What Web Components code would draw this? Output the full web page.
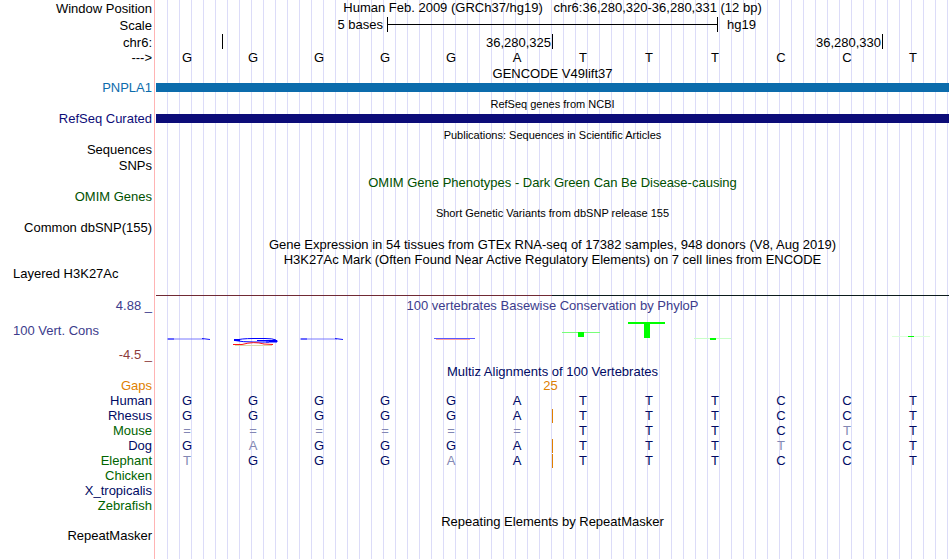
<!DOCTYPE html>
<html lang="en">
<head>
<meta charset="utf-8">
<title>chr6:36,280,320-36,280,331</title>
<style>
  body {
    margin: 0;
    background: #fff;
    color: #000;
    font: 13px/15px "Liberation Sans", Arial, sans-serif;
  }
</style>
</head>
<body>
<genome-view>
  <track-row size="tall" label="Window Position"><track-title>Human Feb. 2009 (GRCh37/hg19)   chr6:36,280,320-36,280,331 (12 bp)</track-title></track-row>
  <track-row size="tall" label="Scale"><scale-bar length="5 bases" assembly="hg19"></scale-bar></track-row>
  <track-row size="tall" label="chr6:"><position-ruler marks="36,280,325 36,280,330"></position-ruler></track-row>
  <track-row label="---&gt;"><base-strip bases="GGGGGATTTCCT"></base-strip></track-row>

  <track-row><track-title>GENCODE V49lift37</track-title></track-row>
  <track-row label="PNPLA1" style="color: #0c6cac"><gene-bar></gene-bar></track-row>
  <track-row gap><track-title small>RefSeq genes from NCBI</track-title></track-row>
  <track-row label="RefSeq Curated" style="color: #0c0c78"><gene-bar></gene-bar></track-row>
  <track-row gap><track-title small>Publications: Sequences in Scientific Articles</track-title></track-row>
  <track-row label="Sequences"></track-row>
  <track-row size="medium" label="SNPs"></track-row>
  <track-row gap style="color: #005000"><track-title>OMIM Gene Phenotypes - Dark Green Can Be Disease-causing</track-title></track-row>
  <track-row label="OMIM Genes" style="color: #005000"></track-row>
  <track-row gap><track-title small>Short Genetic Variants from dbSNP release 155</track-title></track-row>
  <track-row label="Common dbSNP(155)"></track-row>
  <track-row gap><track-title>Gene Expression in 54 tissues from GTEx RNA-seq of 17382 samples, 948 donors (V8, Aug 2019)</track-title></track-row>
  <track-row><track-title>H3K27Ac Mark (Often Found Near Active Regulatory Elements) on 7 cell lines from ENCODE</track-title></track-row>
  <track-row align="left" label="Layered H3K27Ac"><signal-baseline></signal-baseline></track-row>

  <conservation-track></conservation-track>

  <track-row gap style="color: #000a64"><track-title>Multiz Alignments of 100 Vertebrates</track-title></track-row>
  <track-row label="Gaps" style="color: #e08000"><base-gap>25</base-gap></track-row>
  <track-row label="Human" style="color: #000a64"><base-strip aligned bases="GGGGGATTTCCT"></base-strip></track-row>
  <track-row label="Rhesus" style="color: #000a64"><base-strip aligned bases="GGGGGATTTCCT" insert="6"></base-strip></track-row>
  <track-row label="Mouse" style="color: #006400"><base-strip aligned bases="======TTTCTT" faded="0,1,2,3,4,5,10"></base-strip></track-row>
  <track-row label="Dog" style="color: #000a64"><base-strip aligned bases="GAGGGATTTTCT" faded="1,9" insert="6"></base-strip></track-row>
  <track-row label="Elephant" style="color: #006400"><base-strip aligned bases="TGGGAATTTCCT" faded="0,4" insert="6"></base-strip></track-row>
  <track-row label="Chicken" style="color: #006400"></track-row>
  <track-row label="X_tropicalis" style="color: #000a64"></track-row>
  <track-row label="Zebrafish" style="color: #006400"></track-row>
  <track-row><track-title>Repeating Elements by RepeatMasker</track-title></track-row>
  <track-row label="RepeatMasker"></track-row>
</genome-view>

<script>
/**
 * Attaches an open shadow root filled with the given markup.
 *
 * @param {HTMLElement} element - The host element.
 * @param {string} markup - Styles and content.
 */
function attachMarkup (element, markup) {
  const template = document.createElement('template')
  template.innerHTML = markup
  element.attachShadow({ mode: 'open' }).appendChild(template.content.cloneNode(true))
}

/**
 * The page frame: label column, red divider and vertical guide lines.
 */
class GenomeView extends HTMLElement {
  constructor () {
    super()
    attachMarkup(this, `
      <style>
        :host {
          display: grid;
          grid-template-columns: 154px 1px 1fr;
          min-height: 100vh;
        }
        .divider {
          grid-area: 1 / 2;
          background: #ffb4b4;
        }
        .guides {
          grid-area: 1 / 3;
          margin: 0 1px;
          background: repeating-linear-gradient(to right, transparent 0 11px, #dcdcf8 11px 12px);
        }
        main {
          grid-area: 1 / 1 / 2 / 4;
          min-width: 0;
        }
      </style>
      <div class="divider"></div>
      <div class="guides"></div>
      <main><slot></slot></main>
    `)
  }
}
customElements.define('genome-view', GenomeView)

/**
 * One line of the browser: a label and whatever is drawn beside it.
 */
class TrackRow extends HTMLElement {
  constructor () {
    super()
    attachMarkup(this, `
      <style>
        :host {
          display: grid;
          grid-template-columns: 152px 1fr;
          column-gap: 4px;
          min-height: 15px;
          padding-right: 1px;
        }
        :host([size="medium"]) { min-height: 16px; }
        :host([size="tall"]) { min-height: 17px; }
        :host([gap]) { margin-top: 1px; }
        .label {
          line-height: 13px;
          text-align: right;
          white-space: nowrap;
        }
        :host([size="medium"]) .label { line-height: 15px; }
        :host([size="tall"]) .label { line-height: 17px; }
        :host([align="left"]) .label {
          padding-left: 13px;
          text-align: left;
        }
        .content { min-width: 0; }
      </style>
      <div class="label"></div>
      <div class="content"><slot></slot></div>
    `)
  }

  connectedCallback () {
    this.shadowRoot.querySelector('.label').textContent = this.getAttribute('label') || ''
  }
}
customElements.define('track-row', TrackRow)

/**
 * A centred line of text over the track area.
 */
class TrackTitle extends HTMLElement {
  constructor () {
    super()
    attachMarkup(this, `
      <style>
        :host { display: block; }
        div {
          text-align: center;
          white-space: pre;
        }
        :host([small]) { font-size: 11px; }
      </style>
      <div><slot></slot></div>
    `)
  }
}
customElements.define('track-title', TrackTitle)

/**
 * The size of the gap, centred on the boundary between two bases.
 */
class BaseGap extends HTMLElement {
  constructor () {
    super()
    attachMarkup(this, `
      <style>
        :host {
          display: block;
          padding-right: 4px;
          line-height: 13px;
          text-align: center;
        }
      </style>
      <slot></slot>
    `)
  }
}
customElements.define('base-gap', BaseGap)

/**
 * The scale: five bases out of the twelve in view.
 */
class ScaleBar extends HTMLElement {
  connectedCallback () {
    attachMarkup(this, `
      <style>
        :host {
          display: grid;
          grid-template-columns: 7fr 10fr 7fr;
          margin-right: 1px;
        }
        .length { text-align: right; padding-right: 4px; }
        .assembly { padding-left: 10px; }
        .bar {
          display: flex;
          align-items: center;
          height: 15px;
          margin-right: -1px;
          border: solid #000;
          border-width: 0 1px;
          box-sizing: border-box;
        }
        .bar::before {
          content: "";
          flex: 1;
          height: 1px;
          background: #000;
        }
      </style>
      <div class="length">${this.getAttribute('length')}</div>
      <div class="bar"></div>
      <div class="assembly">${this.getAttribute('assembly')}</div>
    `)
  }
}
customElements.define('scale-bar', ScaleBar)

/**
 * Ticks after every fifth base, with the position written to the left.
 */
class PositionRuler extends HTMLElement {
  connectedCallback () {
    const marks = this.getAttribute('marks').split(' ')
    attachMarkup(this, `
      <style>
        :host {
          display: grid;
          grid-template-columns: 1fr 5fr 5fr 1fr;
          margin-right: 1px;
        }
        span {
          height: 15px;
          padding: 1px 1px 0 0;
          box-sizing: border-box;
          text-align: right;
        }
        span + span { border-left: 1px solid #000; }
      </style>
      <span></span>${marks.map(mark => `<span>${mark}</span>`).join('')}<span></span>
    `)
  }
}
customElements.define('position-ruler', PositionRuler)

/**
 * Twelve bases in equal cells, some faded, with an optional insert mark.
 */
class BaseStrip extends HTMLElement {
  connectedCallback () {
    const faded = (this.getAttribute('faded') || '').split(',')
    const insert = this.getAttribute('insert')
    const cells = [...this.getAttribute('bases')].map((base, index) => {
      const names = []
      if (faded.includes(String(index))) names.push('faded')
      if (insert === String(index)) names.push('insert')
      return `<span class="${names.join(' ')}">${base}</span>`
    })
    attachMarkup(this, `
      <style>
        :host {
          display: grid;
          grid-template-columns: repeat(12, 1fr);
          line-height: 13px;
          margin-right: 1px;
        }
        :host([aligned]) { color: #000a64; }
        span {
          height: 14px;
          padding-right: 4px;
          text-align: center;
        }
        .faded { color: #8287b4; }
        .insert { box-shadow: inset 1px 0 #e08000; }
      </style>
      ${cells.join('')}
    `)
  }
}
customElements.define('base-strip', BaseStrip)

/**
 * A solid bar across the track in the row's own colour.
 */
class GeneBar extends HTMLElement {
  constructor () {
    super()
    attachMarkup(this, `
      <style>
        :host { display: block; padding-top: 2px; }
        div { height: 9px; background: currentColor; }
      </style>
      <div></div>
    `)
  }
}
customElements.define('gene-bar', GeneBar)

/**
 * The flat H3K27Ac signal.
 */
class SignalBaseline extends HTMLElement {
  constructor () {
    super()
    attachMarkup(this, `
      <style>
        :host { display: block; padding: 28px 0 2px; }
        div { height: 1px; background: linear-gradient(to right, #702a34 50%, #0c1c1c 50%); }
      </style>
      <div></div>
    `)
  }
}
customElements.define('signal-baseline', SignalBaseline)

/**
 * PhyloP conservation: axis labels and the sequence logo.
 */
class ConservationTrack extends HTMLElement {
  constructor () {
    super()
    attachMarkup(this, `
      <style>
        :host {
          display: grid;
          grid-template-columns: 152px 1fr;
          column-gap: 4px;
          padding-right: 1px;
          color: #3c3c8c;
        }
        .axis {
          display: flex;
          flex-direction: column;
          justify-content: space-between;
          padding-bottom: 1px;
          text-align: right;
        }
        .name { padding-left: 13px; text-align: left; }
        .low { color: #8c3c3c; }
        .plot { min-width: 0; }
        svg { display: block; width: 100%; height: 50px; }
      </style>
      <div class="axis">
        <div>4.88 _</div>
        <div class="name">100 Vert. Cons</div>
        <div class="low">-4.5 _</div>
      </div>
      <div class="plot">
        <track-title>100 vertebrates Basewise Conservation by PhyloP</track-title>
        <svg viewBox="0 0 793 50" preserveAspectRatio="none" aria-hidden="true">
          <g fill="none" stroke="#7878ff">
            <path d="M11 26H48M144 26H181"/>
            <path stroke="#1414ff" d="M12 26H18M46 25.5L54 26.5M145 26H151M179 25.5L187 26.5"/>
            <path stroke="#5a5aff" d="M278 25.5H319"/>
            <path stroke="#ffa0a0" d="M280 26.5H314"/>
          </g>
          <g fill="none" stroke="#0000ff">
            <path d="M79 27.500Q84 25.500 98 25.500H109Q117 25.500 120 27M79 27.500Q86 29 98 29H113M101 27.500H121V29H110"/>
            <path stroke-width="2" d="M78 27H84M113 28H121"/>
            <path stroke="#ff1414" d="M77 31.500L86 31.500Q98 28 108 31L117 31.500"/>
            <path stroke="#dcdcaa" d="M79 32.500H116"/>
          </g>
          <g shape-rendering="crispEdges">
            <path fill="#78ff78" d="M406 19h38v1h-38z"/>
            <path fill="#0f0" d="M422 19h6v5h-6zM472 9h37v2h-37zM488 11h6v14h-6zM554 25h6v2h-6zM752 23h6v1h-6z"/>
            <path fill="#c8ffc8" d="M538 25h16v1h-16zM560 25h15v1h-15z"/>
            <path fill="#dcffdc" d="M736 23h16v1h-16zM758 23h16v1h-16z"/>
          </g>
        </svg>
      </div>
    `)
  }
}
customElements.define('conservation-track', ConservationTrack)
</script>
</body>
</html>
